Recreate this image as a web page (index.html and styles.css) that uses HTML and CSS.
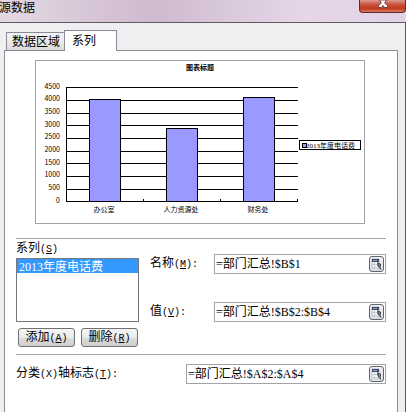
FILE: index.html
```html
<!DOCTYPE html>
<html lang="zh-CN">
  <head>
    <meta charset="UTF-8" />
    <meta name="viewport" content="width=device-width, initial-scale=1.0" />
    <title>源数据</title>
    <link rel="stylesheet" href="styles.css">
  </head>
  <body>
    <div class="dialog">
      <div class="titlebar">
        <h1 class="title">源数据</h1>
        <button class="close-btn" type="button" aria-label="关闭">
          <svg width="12" height="8" viewBox="0 0 12 8">
            <path d="M3 0h6v1L7.6 3 10.5 5.500V7.500H7.500L6 5.500 4.500 7.500H1.500V5.500L4.400 3 3 1z" fill="#fff" stroke="#5c2a2e" stroke-width="0.800" />
          </svg>
        </button>
      </div>

      <div class="body">
        <div class="tabs">
          <button class="tab" type="button">数据区域</button>
          <button class="tab active" type="button">系列</button>
        </div>

        <div class="panel">
          <!-- Chart preview -->
          <svg class="chart" viewBox="0 0 330 164">
            <rect class="chart-frame" x="0.5" y="0.5" width="329" height="163" />
            <text class="chart-title" x="165" y="10">图表标题</text>
            <path class="grid" d="M31 27.500h232M31 40.500h232M31 53.500h232M31 65.500h232M31 78.500h232M31 91.500h232M31 103.500h232M31 116.500h232M31 129.500h232" />
            <rect class="bar" x="54.500" y="39.500" width="31" height="102" />
            <rect class="bar" x="131.500" y="68.500" width="31" height="73" />
            <rect class="bar" x="208.500" y="37.500" width="31" height="104" />
            <path class="grid" d="M31.500 27v115M31 141.500h232M108.500 139v3M185.500 139v3M262.500 139v3" />
            <g class="scale">
              <text x="25" y="29">4500</text>
              <text x="25" y="41">4000</text>
              <text x="25" y="54">3500</text>
              <text x="25" y="67">3000</text>
              <text x="25" y="79">2500</text>
              <text x="25" y="92">2000</text>
              <text x="25" y="105">1500</text>
              <text x="25" y="117">1000</text>
              <text x="25" y="130">500</text>
              <text x="25" y="143">0</text>
            </g>
            <g class="category">
              <text x="69" y="152">办公室</text>
              <text x="146" y="152">人力资源处</text>
              <text x="223" y="152">财务处</text>
            </g>
            <rect class="legend" x="264.500" y="80.500" width="61" height="9" />
            <rect class="bar" x="267.500" y="83.500" width="4" height="4" />
            <text class="legend-text" x="271" y="88">2013年度电话费</text>
          </svg>

          <div class="section series">
            <div class="series-list">
              <label for="seriesList">系列<span class="key">(<u>S</u>)</span></label>
              <select id="seriesList" size="4">
                <option selected>2013年度电话费</option>
              </select>
              <div class="actions">
                <button class="btn" type="button">添加<span class="key">(<u>A</u>)</span></button>
                <button class="btn" type="button">删除<span class="key">(<u>R</u>)</span></button>
              </div>
            </div>

            <div class="fields">
              <div class="field">
                <label for="nameInput">名称<span class="key">(<u>M</u>):</span></label>
                <div class="ref-box">
                  <input type="text" id="nameInput" value="=部门汇总!$B$1" />
                  <button class="pick-btn" type="button" aria-label="选择区域">
                    <svg width="13" height="14" viewBox="0 0 13 14">
                      <path d="M2 2h7v9H2z" fill="#f4f7fb" stroke="#b4bdcb" />
                      <path d="M2 7.500h5M4.500 5v6" stroke="#c3cbd8" />
                      <path d="M2 2h7v3H2z" fill="#3f4c6b" />
                      <path d="M3 3.500h4" stroke="#8fa0c4" />
                      <path d="M7 5l4 2v6L7.500 9z" fill="#40434a" />
                      <path d="M9 7l1.500 4" stroke="#9ba0a8" />
                    </svg>
                  </button>
                </div>
              </div>
              <div class="field">
                <label for="valueInput">值<span class="key">(<u>V</u>):</span></label>
                <div class="ref-box">
                  <input type="text" id="valueInput" value="=部门汇总!$B$2:$B$4" />
                  <button class="pick-btn" type="button" aria-label="选择区域">
                    <svg width="13" height="14" viewBox="0 0 13 14">
                      <path d="M2 2h7v9H2z" fill="#f4f7fb" stroke="#b4bdcb" />
                      <path d="M2 7.500h5M4.500 5v6" stroke="#c3cbd8" />
                      <path d="M2 2h7v3H2z" fill="#3f4c6b" />
                      <path d="M3 3.500h4" stroke="#8fa0c4" />
                      <path d="M7 5l4 2v6L7.500 9z" fill="#40434a" />
                      <path d="M9 7l1.500 4" stroke="#9ba0a8" />
                    </svg>
                  </button>
                </div>
              </div>
            </div>
          </div>

          <div class="section axis">
            <label for="axisInput">分类<span class="key">(X)</span>轴标志<span class="key">(<u>T</u>):</span></label>
            <div class="ref-box">
              <input type="text" id="axisInput" value="=部门汇总!$A$2:$A$4" />
              <button class="pick-btn" type="button" aria-label="选择区域">
                <svg width="13" height="14" viewBox="0 0 13 14">
                  <path d="M2 2h7v9H2z" fill="#f4f7fb" stroke="#b4bdcb" />
                  <path d="M2 7.500h5M4.500 5v6" stroke="#c3cbd8" />
                  <path d="M2 2h7v3H2z" fill="#3f4c6b" />
                  <path d="M3 3.500h4" stroke="#8fa0c4" />
                  <path d="M7 5l4 2v6L7.500 9z" fill="#40434a" />
                  <path d="M9 7l1.500 4" stroke="#9ba0a8" />
                </svg>
              </button>
            </div>
          </div>
        </div>
      </div>
    </div>
  </body>
</html>
```
FILE: styles.css
```css
* {
  margin: 0;
  padding: 0;
  box-sizing: border-box;
}

body,
button,
input,
select {
  font-family: "Liberation Serif", "Noto Sans CJK SC", serif;
  font-size: 12px;
  line-height: 16px;
  color: #000;
}

.dialog {
  display: flex;
  flex-direction: column;
  min-height: 100vh;
  overflow: hidden;
}

/* Title bar */
.titlebar {
  display: flex;
  justify-content: space-between;
  align-items: flex-start;
  height: 22px;
  background: linear-gradient(90deg, #e3d9e3 0%, #d8c8d8 20%, #cfbacf 38%, #d9c7da 55%, #e6d6e8 75%, #e2d2e5 100%);
}

.title {
  margin-left: -1px;
  font-size: 12px;
  font-weight: normal;
}

.close-btn {
  display: flex;
  justify-content: center;
  width: 47px;
  height: 13px;
  border: 1px solid #5b2b30;
  border-top: none;
  border-radius: 0 0 4px 4px;
  background: linear-gradient(#d99a8c, #c9503a 40%, #c23a1e 70%, #dd7a5c);
}

.body {
  display: flex;
  flex-direction: column;
  flex: 1;
  padding: 7px 7px 0 4px;
  border-top: 1px solid #5f5a62;
  border-right: 1px solid #5f5a62;
  background-color: #efeff1;
}

/* Tabs */
.tabs {
  display: flex;
  align-items: flex-end;
  padding-left: 2px;
}

.tab {
  height: 18px;
  padding: 0 4px 0 5px;
  border: 1px solid #8b8c93;
  border-right: none;
  border-bottom: none;
  background: linear-gradient(#f3f3f3, #ececec 50%, #d9d9d9);
}

.tab.active {
  z-index: 1;
  height: 21px;
  margin-bottom: -1px;
  padding: 0 20px 0 7px;
  border-right: 1px solid #8b8c93;
  background: #fff;
}

.panel {
  flex: 1;
  padding: 9px 11px 0;
  border: 1px solid #8b8c93;
  border-bottom: none;
  background-color: #fff;
}

/* Chart */
.chart {
  display: block;
  width: calc(100% - 40px);
  margin: 0 21px 14px 19px;
  font-size: 7px;
  shape-rendering: crispEdges;
}

.chart-frame {
  fill: #fff;
  stroke: #a3a3a7;
}

.chart-title {
  font-weight: bold;
  text-anchor: middle;
}

.grid {
  fill: none;
  stroke: #000;
}

.bar {
  fill: #9999ff;
  stroke: #000;
}

.scale {
  font-family: "Noto Sans CJK SC", sans-serif;
  text-anchor: end;
}

.category {
  text-anchor: middle;
}

.legend {
  fill: #fff;
  stroke: #000;
}

/* Form */
.section {
  display: flex;
  border-top: 1px solid #a3a3a7;
}

.key {
  font-family: "Liberation Mono", monospace;
  font-size: 10px;
}

.series {
  gap: 11px;
  height: 116px;
}

.series-list {
  display: flex;
  flex-direction: column;
  flex-shrink: 0;
  width: 123px;
  padding-top: 1px;
}

.series-list select {
  width: 100%;
  height: 64px;
  border: 1px solid #77787e;
  border-radius: 0;
  background-color: #fff;
  outline: none;
  overflow: hidden;
  appearance: none;
}

.series-list option {
  display: flex;
  align-items: center;
  height: 14px;
  min-height: 14px;
  padding: 0 2px;
}

.series-list option:checked {
  background: linear-gradient(#3399ff, #3399ff);
  color: #fff;
  -webkit-text-fill-color: #fff;
}

.actions {
  display: flex;
  justify-content: space-between;
  padding: 6px 1px 0 2px;
}

.btn {
  width: 57px;
  height: 19px;
  border: 1px solid #707070;
  border-radius: 3px;
  background: linear-gradient(#f4f4f4, #ebebeb 50%, #dcdcdc 51%, #cfcfcf);
  line-height: 17px;
}

.fields {
  display: flex;
  flex-direction: column;
  flex: 1;
  gap: 28px;
  min-width: 0;
  padding-top: 15px;
}

.field {
  display: flex;
  align-items: center;
}

.field label {
  width: 64px;
}

.ref-box {
  display: flex;
  align-items: center;
  flex: 1;
  min-width: 0;
  height: 20px;
  padding-right: 1px;
  border: 1px solid #a3a3a7;
  background-color: #fff;
}

.ref-box input {
  flex: 1;
  min-width: 0;
  padding-left: 1px;
  border: none;
  outline: none;
  background: none;
}

.pick-btn {
  display: flex;
  width: 15px;
  height: 16px;
  border: 1px solid #62646c;
  border-radius: 3px;
  background: linear-gradient(#f4f4f4, #d9dbe0);
}

.axis {
  align-items: center;
  padding-top: 9px;
}

.axis label {
  width: 170px;
}
```
